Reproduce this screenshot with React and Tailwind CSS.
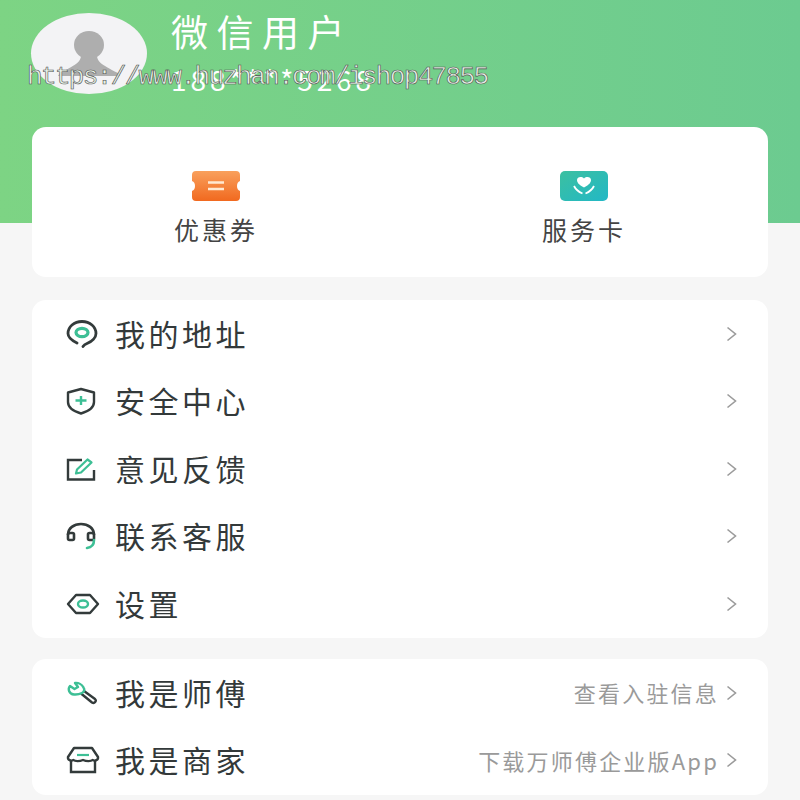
import React from "react";

const cjk = "font-['Noto_Sans_CJK_SC','Noto_Sans',sans-serif]";

const Chevron = () => (
  <svg className="-mt-[2px]" width="11" height="16" viewBox="0 0 11 16" fill="none" stroke="#9b9b9b" strokeWidth="1.6">
    <path d="M1.5 1.500 9.500 8l-8 6.500" />
  </svg>
);

const dark = "#333b3b";
const green = "#3dbf95";

const icons = {
  pin: (
    <svg width="32" height="28" viewBox="0 0 32 28" fill="none" strokeWidth="2.8">
      <path d="M11 23C5 20 2 16.500 2 13.500 2 7 8 1.500 16 1.500S30 7 30 13.500c0 4-4 8-9 10-2 .8-3 1.500-4 3" stroke={dark} strokeLinecap="round" />
      <ellipse cx="16" cy="12.500" rx="6" ry="4.200" stroke={green} strokeWidth="3.200" />
    </svg>
  ),
  shield: (
    <svg width="30" height="28" viewBox="0 0 30 28" fill="none" strokeWidth="2.4">
      <path d="M15 2 28 5.500V15c0 6-6 9.500-13 11.500C8 24.500 2 21 2 15V5.500Z" stroke={dark} strokeLinejoin="round" />
      <path d="M9.500 13.500h11M15 9v9" stroke={green} strokeWidth="2.400" />
    </svg>
  ),
  edit: (
    <svg width="30" height="26" viewBox="0 0 30 26" fill="none" strokeWidth="2.4">
      <path d="M16 4H2v19.500h26V14" stroke={dark} />
      <path d="m10 17.500 1-4L21.500 3.500l4 3L15 16.500Z" stroke={green} strokeWidth="2.200" strokeLinejoin="round" />
    </svg>
  ),
  headset: (
    <svg width="30" height="28" viewBox="0 0 30 28" fill="none" strokeWidth="2.6">
      <path d="M2 13C2 6 8 2 15 2s13 4 13 11" stroke={dark} />
      <rect x="2" y="11" width="6" height="7" rx="1.500" stroke={dark} />
      <rect x="22" y="11" width="6" height="7" rx="1.500" stroke={dark} />
      <path d="M28 18c0 5-3 7.500-7 8" stroke={green} strokeLinecap="round" />
    </svg>
  ),
  hex: (
    <svg width="34" height="22" viewBox="0 0 34 22" fill="none" strokeWidth="2.400">
      <path d="M10 2h14l8 9-8 9H10L2 11Z" stroke={dark} strokeLinejoin="round" />
      <ellipse cx="17" cy="11" rx="5" ry="3.500" stroke={green} strokeWidth="2.400" />
    </svg>
  ),
  wrench: (
    <svg width="32" height="24" viewBox="0 0 32 24" fill="none" strokeWidth="2.400">
      <path d="M15 12.500 26 21.500c2.500 1.500 5-1.500 3-3.500L18 10" stroke={dark} strokeLinejoin="round" />
      <path d="M9 2 12 6 8.500 8 4 5C1.500 8 3 13 8 13.500c3 .3 6-.500 8-1.500 2-1 3-3.500 1.500-5.500C16 3.500 12.500 1.500 9 2Z" stroke={green} strokeLinejoin="round" />
    </svg>
  ),
  store: (
    <svg width="34" height="28" viewBox="0 0 34 28" fill="none" strokeWidth="2.400">
      <path d="M8 2h18l6 9c.5 3-3 4.500-5.500 3-1.500 1.500-6 1.500-9.500 0-3.500 1.500-8 1.500-9.500 0C5 15.500 1.500 14 2 11Z" stroke={dark} strokeLinejoin="round" />
      <path d="M5 15v11h24V15" stroke={dark} />
      <path d="M11 9h12" stroke={green} strokeWidth="2.200" />
    </svg>
  ),
};

const menu = [
  { icon: "pin", label: "我的地址" },
  { icon: "shield", label: "安全中心" },
  { icon: "edit", label: "意见反馈" },
  { icon: "headset", label: "联系客服" },
  { icon: "hex", label: "设置" },
];

const Row = ({ icon, label, hint }) => (
  <div className="flex h-[67.5px] items-center pl-[34px] pr-[31px]">
    <div className="-mt-[2px] flex w-[49px] justify-start">{icons[icon]}</div>
    <span className="-mt-[4px] text-[30px] leading-none tracking-[3.500px] text-[#33393a]">{label}</span>
    <div className="ml-auto flex items-center gap-[7px]">
      {hint && <span className="-mt-[3px] text-[22px] leading-none tracking-[2.200px] text-[#9a9a9a]">{hint}</span>}
      <Chevron />
    </div>
  </div>
);

export default function App() {
  return (
    <div className={`relative h-[800px] w-[800px] overflow-hidden bg-[#f6f6f6] ${cjk}`}>
      <div className="h-[223px] bg-gradient-to-r from-[#7dd484] to-[#6ccb90] pl-[31px] pt-[13px]">
        <div className="flex items-start">
          <div className="relative h-[81px] w-[116px] overflow-hidden rounded-[50%] bg-[#f3f3f5]">
            <svg className="absolute left-[27px] top-[18px]" width="62" height="45" viewBox="0 0 62 45" fill="#aeaeae">
              <ellipse cx="31" cy="14" rx="15" ry="14" />
              <path d="M23 24h16c0 6 3 9 21 18l2 3H0l2-3c18-9 21-12 21-18Z" />
            </svg>
          </div>
          <div className="ml-[24px] flex flex-col text-white">
            <span className="-mt-[1px] text-[37px] leading-[38px] tracking-[8.500px]">微信用户</span>
            <span className="mt-[14px] text-[28px] leading-[30px] tracking-[3.900px]">188****5268</span>
          </div>
        </div>
      </div>

      <div className="absolute left-[27px] top-[62px] font-['Liberation_Mono',monospace] text-[26px] leading-[30px] tracking-[-1.650px] text-[#e8f3e8] [-webkit-text-stroke:0.600px_#4f4f4f]">
        https://www.huzhan.com/ishop47855
      </div>

      <div className="relative mx-[32px] -mt-[96px] grid h-[150px] grid-cols-2 rounded-[14px] bg-white">
        <div className="flex flex-col items-center pt-[44px]">
          <svg width="50" height="30" viewBox="0 0 50 30">
            <defs>
              <linearGradient id="coupon" x1="0" y1="0" x2="0" y2="1">
                <stop offset="0" stopColor="#f9a05c" />
                <stop offset="1" stopColor="#f1691f" />
              </linearGradient>
            </defs>
            <path d="M5 0h40a4 4 0 0 1 4 4v6c-4 1-4 9 0 10v6a4 4 0 0 1-4 4H5a4 4 0 0 1-4-4v-6c4-1 4-9 0-10V4a4 4 0 0 1 4-4Z" fill="url(#coupon)" />
            <path d="M17 11.500h16M17 18h16" stroke="#ffe9d2" strokeWidth="2.400" />
          </svg>
          <span className="mt-[16px] text-[25px] leading-none tracking-[3px] text-[#444]">优惠券</span>
        </div>
        <div className="flex flex-col items-center pt-[44px]">
          <svg width="50" height="30" viewBox="0 0 50 30">
            <defs>
              <linearGradient id="card" x1="0" y1="0" x2="1" y2="1">
                <stop offset="0" stopColor="#3cc0a0" />
                <stop offset="1" stopColor="#22b8c6" />
              </linearGradient>
            </defs>
            <rect x="1" width="48" height="30" rx="5" fill="url(#card)" />
            <path d="M25 16.500c-3.500-2-7-4-7-7.500 0-3 4.500-4 7-1.500 2.500-2.500 7-1.500 7 1.500 0 3.500-3.500 5.500-7 7.500Z" fill="#fff" />
            <path d="M15 15c2 4 5 6 8.500 7.500M35 15c-2 4-5 6-8.500 7.500" stroke="#fff" strokeWidth="1.800" fill="none" />
          </svg>
          <span className="mt-[16px] text-[25px] leading-none tracking-[3px] text-[#444]">服务卡</span>
        </div>
      </div>

      <div className="mx-[32px] mt-[23px] h-[338px] rounded-[14px] bg-white pt-px">
        {menu.map((item) => (
          <Row key={item.label} {...item} />
        ))}
      </div>

      <div className="mx-[32px] mt-[21px] h-[136px] rounded-[14px] bg-white pt-px">
        <Row icon="wrench" label="我是师傅" hint="查看入驻信息" />
        <Row icon="store" label="我是商家" hint="下载万师傅企业版App" />
      </div>
    </div>
  );
}
